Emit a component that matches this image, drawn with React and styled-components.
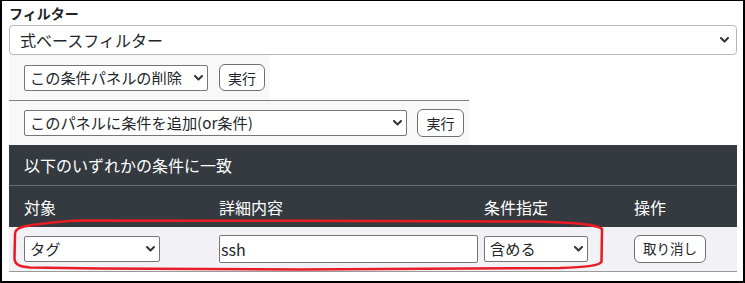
import React from "react";
import styled, { createGlobalStyle } from "styled-components";

const Global = createGlobalStyle`
  html, body { margin: 0; padding: 0; background: #fff; }
  body { font-family: "Noto Sans CJK JP", "Noto Sans", sans-serif; color: #212529; }
  * { box-sizing: border-box; }
`;

const Frame = styled.div`
  position: relative;
  width: 745px;
  height: 283px;
  border-style: solid;
  border-color: #000;
  border-width: 1px 2px 2px 2px;
  padding: 0 6px 0 7px;
  overflow: hidden;
`;

const Label = styled.div`
  margin-top: 2px;
  font-size: 14px;
  font-weight: 700;
  line-height: 20px;
  color: #212529;
`;

const SelectWrap = styled.div`
  position: relative;
  display: inline-flex;
  width: ${(p) => p.$w || "100%"};
  margin-top: ${(p) => p.$mt || "0"};
`;

const NativeSelect = styled.select`
  appearance: none;
  -webkit-appearance: none;
  width: 100%;
  height: ${(p) => (p.$big ? "30px" : "26px")};
  padding: 0 18px 0 ${(p) => (p.$big ? "10px" : "5px")};
  border: 1px solid ${(p) => (p.$big ? "#b3b8bd" : "#767676")};
  border-radius: ${(p) => (p.$big ? "4px" : "2px")};
  background: #fff;
  color: #212529;
  font-family: "Noto Sans CJK JP", sans-serif;
  font-size: ${(p) => (p.$big ? "16px" : "15.2px")};
  line-height: 1;
  outline: none;
`;

const Chevron = styled.svg`
  position: absolute;
  right: ${(p) => (p.$big ? "8px" : "5px")};
  top: 50%;
  width: 9px;
  height: 6px;
  margin-top: -3px;
  pointer-events: none;
`;

function Select({ children, w, mt, big }) {
  return (
    <SelectWrap $w={w} $mt={mt}>
      <NativeSelect $big={big} defaultValue={children}>
        <option>{children}</option>
      </NativeSelect>
      <Chevron $big={big} viewBox="0 0 9 6">
        <polyline
          points="1,1 4.5,4.5 8,1"
          fill="none"
          stroke="#333"
          strokeWidth="2"
          strokeLinecap="round"
          strokeLinejoin="round"
        />
      </Chevron>
    </SelectWrap>
  );
}

const PanelRow = styled.div`
  display: flex;
  align-items: center;
  width: fit-content;
  background: #f8f8f8;
  gap: ${(p) => p.$gap};
  padding: ${(p) => p.$pad};
  border-top: ${(p) => (p.$line ? "1px solid #808080" : "none")};
`;

const Button = styled.button`
  height: ${(p) => p.$h || "27px"};
  width: ${(p) => p.$w};
  padding: 0;
  border: 1px solid #6f6f6f;
  border-radius: 6px;
  background: #fff;
  color: #212529;
  font-family: "Noto Sans CJK JP", sans-serif;
  font-size: ${(p) => p.$fs || "14px"};
  line-height: 1;
  cursor: pointer;
`;

const Table = styled.div`
  width: 100%;
`;

const TitleRow = styled.div`
  display: flex;
  align-items: center;
  height: 41px;
  padding-left: 15px;
  background: #343a40;
  border-bottom: 1px solid #6a6e73;
  color: #fff;
  font-size: 16px;
`;

const GridRow = styled.div`
  display: grid;
  grid-template-columns: 188px 258px 143px 1fr;
  column-gap: 7px;
  align-items: center;
  padding-left: 15px;
  height: ${(p) => p.$h};
  background: ${(p) => (p.$dark ? "#343a40" : "#f2f2f6")};
  color: ${(p) => (p.$dark ? "#fff" : "#212529")};
  font-size: 16px;
  border-bottom: ${(p) => (p.$dark ? "none" : "1px solid #9a9a9a")};
`;

const TextInput = styled.input`
  width: 259px;
  height: 28px;
  padding: 0 0 0 1px;
  border: 1px solid #767676;
  border-radius: 2px;
  background: #fff;
  font-family: "Noto Sans CJK JP", sans-serif;
  font-size: 16px;
  color: #212529;
  outline: none;
`;

const Annotation = styled.svg`
  position: absolute;
  left: -2px;
  top: -1px;
  width: 745px;
  height: 283px;
  pointer-events: none;
`;

export default function App() {
  return (
    <>
      <Global />
      <Frame>
        <Label>フィルター</Label>
        <Select big mt="2px">式ベースフィルター</Select>
        <PanelRow $gap="11px" $pad="9px 5px 9px 15px">
          <Select w="184px">この条件パネルの削除</Select>
          <Button $w="46px">実行</Button>
        </PanelRow>
        <PanelRow $line $gap="10px" $pad="8px 5px 8px 15px">
          <Select w="383px">このパネルに条件を追加(or条件)</Select>
          <Button $w="47px" $h="28px">実行</Button>
        </PanelRow>
        <Table>
          <TitleRow>以下のいずれかの条件に一致</TitleRow>
          <GridRow $dark $h="41px">
            <span>対象</span>
            <span>詳細内容</span>
            <span>条件指定</span>
            <span>操作</span>
          </GridRow>
          <GridRow $h="45px">
            <Select w="136px">タグ</Select>
            <TextInput defaultValue="ssh" />
            <Select w="104px">含める</Select>
            <div>
              <Button $w="72px" $h="28px" $fs="13.5px">取り消し</Button>
            </div>
          </GridRow>
        </Table>
        <Annotation viewBox="0 0 745 283">
          <path
            d="M 78 220.5 L 300 220.8 L 535 221.5 C 572 222.5 597 224 602 229 L 601.5 262 C 598 266 585 267 560 268 L 300 269.5 L 100 268.5 L 30 267.5 C 18 266.5 14.5 264 14.5 258 L 15 234 C 15 228 22 226 40 224 C 55 222 66 221 78 220.5 Z"
            fill="none"
            stroke="#e81c24"
            strokeWidth="2.5"
            strokeLinejoin="round"
          />
        </Annotation>
      </Frame>
    </>
  );
}
